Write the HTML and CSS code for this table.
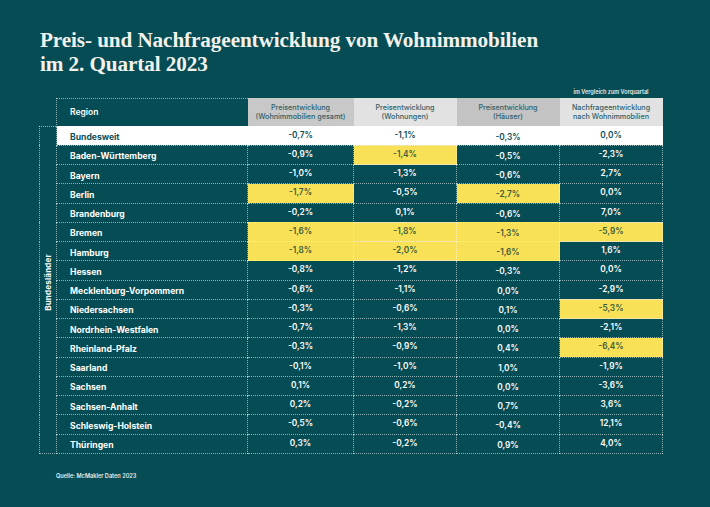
FILE: index.html
```html
<!DOCTYPE html>
<html lang="de">
<head>
<meta charset="utf-8">
<title>Preis- und Nachfrageentwicklung</title>
<link rel="stylesheet" href="styles.css">
</head>
<body>
<div class="page">
  <h1 class="title">Preis- und Nachfrageentwicklung von Wohnimmobilien<br>im 2. Quartal 2023</h1>
  <table class="grid">
    <colgroup>
      <col class="c-side"><col class="c-region"><col class="c-v1"><col class="c-v"><col class="c-v"><col class="c-v">
    </colgroup>
    <tr class="note-row">
      <td colspan="5"></td>
      <td class="note">im Vergleich zum Vorquartal</td>
    </tr>
    <tr class="head">
      <td class="blank"></td>
      <td class="h-region">Region</td>
      <td class="h h-dark">Preisentwicklung<br>(Wohnimmobilien gesamt)</td>
      <td class="h h-light">Preisentwicklung<br>(Wohnungen)</td>
      <td class="h h-dark2">Preisentwicklung<br>(Häuser)</td>
      <td class="h h-light">Nachfrageentwicklung<br>nach Wohnimmobilien</td>
    </tr>
    <tr class="row total">
      <td class="side" rowspan="17"><span class="side-label">Bundesländer</span></td>
      <td class="reg">Bundesweit</td>
      <td class="v a">-0,7%</td><td class="v b">-1,1%</td><td class="v c">-0,3%</td><td class="v d">0,0%</td>
    </tr>
    <tr class="row"><td class="reg">Baden-Württemberg</td><td class="v a">-0,9%</td><td class="v b hl">-1,4%</td><td class="v c">-0,5%</td><td class="v d">-2,3%</td></tr>
    <tr class="row"><td class="reg">Bayern</td><td class="v a">-1,0%</td><td class="v b">-1,3%</td><td class="v c">-0,6%</td><td class="v d">2,7%</td></tr>
    <tr class="row"><td class="reg">Berlin</td><td class="v a hl">-1,7%</td><td class="v b">-0,5%</td><td class="v c hl">-2,7%</td><td class="v d">0,0%</td></tr>
    <tr class="row"><td class="reg">Brandenburg</td><td class="v a">-0,2%</td><td class="v b">0,1%</td><td class="v c">-0,6%</td><td class="v d">7,0%</td></tr>
    <tr class="row"><td class="reg">Bremen</td><td class="v a hl">-1,6%</td><td class="v b hl">-1,8%</td><td class="v c hl">-1,3%</td><td class="v d hl">-5,9%</td></tr>
    <tr class="row"><td class="reg">Hamburg</td><td class="v a hl">-1,8%</td><td class="v b hl">-2,0%</td><td class="v c hl">-1,6%</td><td class="v d">1,6%</td></tr>
    <tr class="row"><td class="reg">Hessen</td><td class="v a">-0,8%</td><td class="v b">-1,2%</td><td class="v c">-0,3%</td><td class="v d">0,0%</td></tr>
    <tr class="row"><td class="reg">Mecklenburg-Vorpommern</td><td class="v a">-0,6%</td><td class="v b">-1,1%</td><td class="v c">0,0%</td><td class="v d">-2,9%</td></tr>
    <tr class="row"><td class="reg">Niedersachsen</td><td class="v a">-0,3%</td><td class="v b">-0,6%</td><td class="v c">0,1%</td><td class="v d hl">-5,3%</td></tr>
    <tr class="row"><td class="reg">Nordrhein-Westfalen</td><td class="v a">-0,7%</td><td class="v b">-1,3%</td><td class="v c">0,0%</td><td class="v d">-2,1%</td></tr>
    <tr class="row"><td class="reg">Rheinland-Pfalz</td><td class="v a">-0,3%</td><td class="v b">-0,9%</td><td class="v c">0,4%</td><td class="v d hl">-6,4%</td></tr>
    <tr class="row"><td class="reg">Saarland</td><td class="v a">-0,1%</td><td class="v b">-1,0%</td><td class="v c">1,0%</td><td class="v d">-1,9%</td></tr>
    <tr class="row"><td class="reg">Sachsen</td><td class="v a">0,1%</td><td class="v b">0,2%</td><td class="v c">0,0%</td><td class="v d">-3,6%</td></tr>
    <tr class="row"><td class="reg">Sachsen-Anhalt</td><td class="v a">0,2%</td><td class="v b">-0,2%</td><td class="v c">0,7%</td><td class="v d">3,6%</td></tr>
    <tr class="row"><td class="reg">Schleswig-Holstein</td><td class="v a">-0,5%</td><td class="v b">-0,6%</td><td class="v c">-0,4%</td><td class="v d">12,1%</td></tr>
    <tr class="row"><td class="reg">Thüringen</td><td class="v a">0,3%</td><td class="v b">-0,2%</td><td class="v c">0,9%</td><td class="v d">4,0%</td></tr>
  </table>
  <p class="source">Quelle: McMakler Daten 2023</p>
</div>
</body>
</html>
```
FILE: styles.css
```css
html, body {
  margin: 0;
  padding: 0;
  background: #064c54;
}
.page {
  width: 710px;
  height: 507px;
  padding: 28px 0 0 39px;
  box-sizing: border-box;
  font-family: Inter, "Noto Sans", sans-serif;
  color: #ffffff;
}
.title {
  margin: 0 0 0 1px;
  font-family: "Liberation Serif", "DejaVu Serif", serif;
  font-weight: 700;
  font-size: 21.2px;
  line-height: 24px;
  color: #f2f1ec;
  letter-spacing: -0.1px;
}
.grid {
  margin-top: 9px;
  border-collapse: collapse;
  table-layout: fixed;
  width: 624px;
}
.c-side { width: 17px; }
.c-region { width: 191px; }
.c-v1 { width: 106px; }
.c-v { width: 103px; }
.grid td {
  padding: 0;
  line-height: 10px;
}
.note-row td {
  height: 11px;
  vertical-align: top;
}
.note {
  font-size: 5.5px;
  font-weight: 600;
  text-align: center;
  color: #e8efee;
  padding-top: 2px !important;
}
.head td {
  height: 27px;
}
.h-region {
  border-top: 1px dotted rgba(255,255,255,0.55);
  border-left: 1px dotted rgba(255,255,255,0.55);
  padding-left: 13px !important;
  font-size: 8.5px;
  font-weight: 600;
}
.h {
  font-size: 7.2px;
  line-height: 9px !important;
  font-weight: 500;
  color: #2f6067;
  text-align: center;
}
.h-dark { background: #c8c8c8; }
.h-dark2 { background: #c3c3c3; }
.h-light { background: #e2e2e2; }
.row {
  height: 19.25px;
}
.row td {
  border: 1px dotted rgba(255,255,255,0.55);
}
.side {
  vertical-align: middle;
  text-align: center;
  padding-bottom: 14px !important;
}
.side-label {
  display: inline-block;
  writing-mode: vertical-rl;
  transform: rotate(180deg);
  font-size: 8px;
  font-weight: 700;
  letter-spacing: 0.2px;
}
.reg {
  padding: 3px 0 0 13px !important;
  font-size: 8.6px;
  font-weight: 700;
  white-space: nowrap;
}
.v {
  text-align: center;
  font-size: 8.3px;
  font-weight: 600;
}
.v.a, .v.b, .v.d {
  padding-bottom: 2px !important;
}
.v.c {
  padding-top: 2px !important;
}
.total td.reg, .total td.v {
  background: #ffffff;
  color: #0d4f57;
}
.hl {
  background: #f8e157;
  color: #3e5d3c;
}
.source {
  margin: 19px 0 0 17px;
  font-size: 5.6px;
  font-weight: 600;
  color: #e8efee;
}
```
